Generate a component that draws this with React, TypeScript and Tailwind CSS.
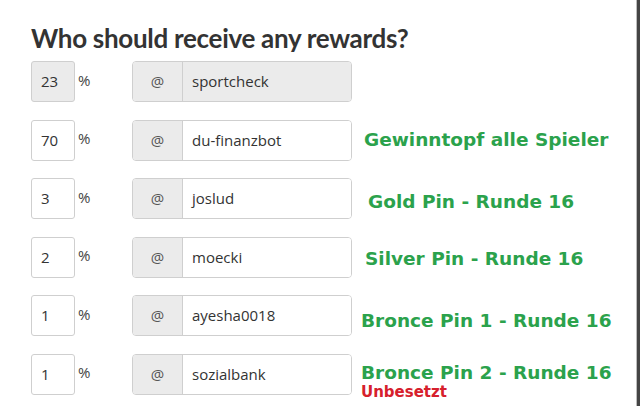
import React from 'react';

type Row = {
  pct: string;
  user: string;
  label?: string;
  note?: string;
  disabled?: boolean;
  labelClass?: string;
};

const ROWS: Row[] = [
  { pct: '23', user: 'sportcheck', disabled: true },
  { pct: '70', user: 'du-finanzbot', label: 'Gewinntopf alle Spieler', labelClass: 'ml-[12px] mt-[9px]' },
  { pct: '3', user: 'joslud', label: 'Gold Pin - Runde 16', labelClass: 'ml-[16px] mt-[13px]' },
  { pct: '2', user: 'moecki', label: 'Silver Pin - Runde 16', labelClass: 'ml-[13px] mt-[11.5px]' },
  { pct: '1', user: 'ayesha0018', label: 'Bronce Pin 1 - Runde 16', labelClass: 'ml-[9px] mt-[14.5px]' },
  { pct: '1', user: 'sozialbank', label: 'Bronce Pin 2 - Runde 16', note: 'Unbesetzt', labelClass: 'ml-[9px] mt-[8px]' },
];

const RewardRow = ({ row }: { row: Row }) => (
  <div className="flex items-center h-[41px]">
    <div
      className={`w-[44px] h-full border border-[#cfcfcf] rounded-[3px] flex items-center pl-[9px] text-[15px] text-[#333] ${
        row.disabled ? 'bg-[#ebebeb]' : 'bg-white'
      }`}
    >
      {row.pct}
    </div>
    <span className="ml-[3px] mb-[3px] w-[54px] text-[15px] text-[#444]">%</span>
    <div className="w-[220px] h-full flex border border-[#cfcfcf] rounded-[4px] overflow-hidden">
      <div className="w-[50px] bg-[#ebebeb] border-r border-[#cfcfcf] flex items-center justify-center text-[15px] text-[#555]">
        @
      </div>
      <div
        className={`flex-1 flex items-center pl-[9px] text-[15px] text-[#333] ${
          row.disabled ? 'bg-[#ebebeb]' : 'bg-white'
        }`}
      >
        {row.user}
      </div>
    </div>
    {row.label && (
      <div className={`self-start flex flex-col whitespace-nowrap font-['DejaVu_Sans',Verdana,sans-serif] font-bold ${row.labelClass}`}>
        <span className="text-[18.5px] leading-[22px] text-[#2ba24c]">{row.label}</span>
        {row.note && <span className="text-[15px] leading-[16px] text-[#d6202c]">{row.note}</span>}
      </div>
    )}
  </div>
);

export default function App() {
  return (
    <div className="w-[640px] h-[406px] flex bg-white overflow-hidden font-['Open_Sans',sans-serif]">
      <div className="flex-1 pl-[31px] pt-[22px]">
        <h2 className="font-['Lato',sans-serif] font-bold text-[26px] leading-[32px] text-[#333] tracking-[-0.3px]">
          Who should receive any rewards?
        </h2>
        <div className="mt-[7px] flex flex-col gap-[17.5px]">
          {ROWS.map((row, i) => (
            <RewardRow key={i} row={row} />
          ))}
        </div>
      </div>
      <div className="w-px bg-[#bdbdbd]" />
      <div className="w-[3px] bg-[#454545]" />
    </div>
  );
}
